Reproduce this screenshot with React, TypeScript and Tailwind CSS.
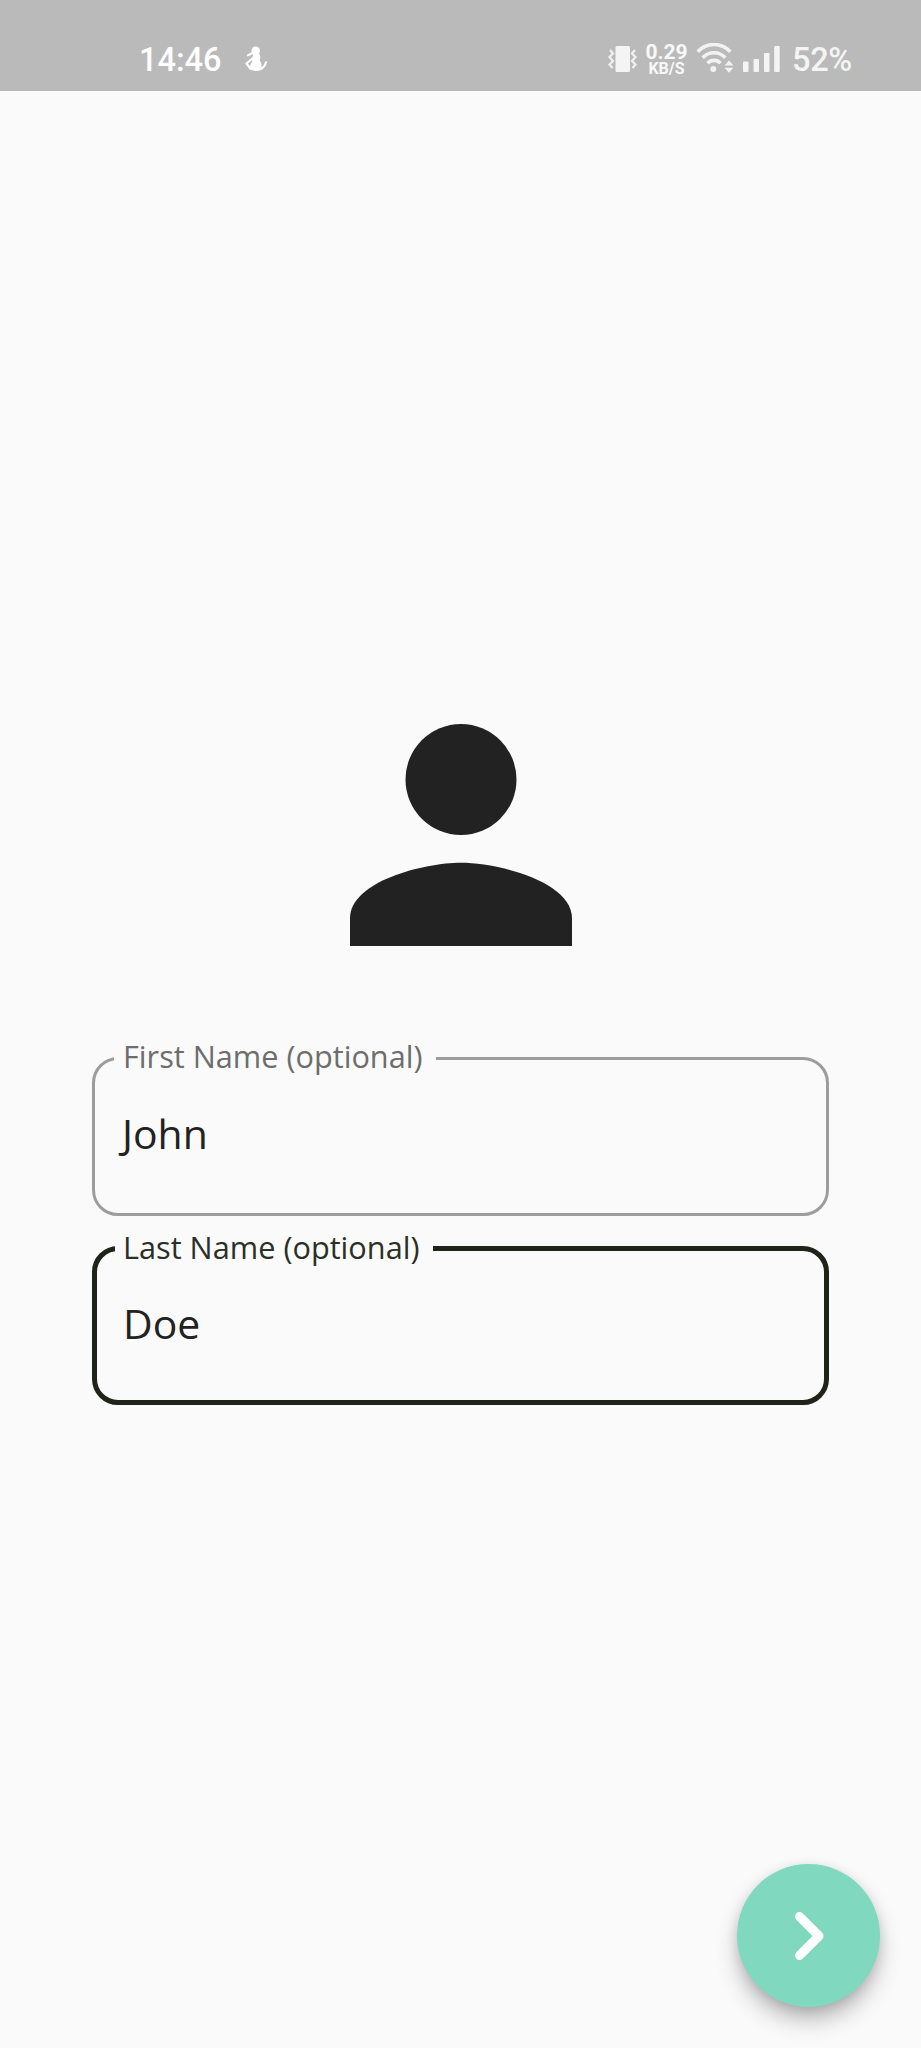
import React from "react";

function Mascot() {
  return (
    <svg className="mt-[46px] ml-[24px] h-[26px] w-[23px]" viewBox="0 0 23 26" fill="none">
      <circle cx="10.7" cy="4.8" r="4.3" fill="#fff" />
      <path d="M8 8h6.500l1 3.500-.8 2.500 1.800 4.500c.5 3.500-2 6.300-5.500 6.300-3.500 0-6-2.300-6-5.300l2-3.500z" fill="#fff" />
      <path d="M2.800 9.400L7 7.300M8.500 11.500L1.500 17.500l4 5.300 5.500 1.200c5.500 0 8.800-3 10-7.700" stroke="#fff" strokeWidth="2.100" strokeLinecap="round" strokeLinejoin="round" />
    </svg>
  );
}

function Vibrate() {
  return (
    <svg className="mt-[45px] h-[28px] w-[29px]" viewBox="0 0 29 28" fill="none">
      <rect x="7.500" y="1" width="14.500" height="26" rx="1.500" fill="#f4f4f4" />
      <path d="M2 5l3 3.500-3.500 3.500 3.500 4-3.500 3.500 3 3.500M27 5l-3 3.500 3.500 3.500-3.500 4 3.500 3.500-3 3.500" stroke="#f1f1f1" strokeWidth="2.200" />
    </svg>
  );
}

function Wifi() {
  return (
    <svg className="mt-[43px] ml-[8px] h-[30px] w-[39px]" viewBox="0 0 39 30" fill="none">
      <path d="M1.700 8.800C10.800-1 25.200-1 34.300 8.800M6.600 14.800c6.300-6.700 16.500-6.700 22.800 0M11.500 20.200c3.700-3.800 9.300-3.800 13 0" stroke="#f2f2f2" strokeWidth="3.600" />
      <circle cx="17.300" cy="26" r="3" fill="#f2f2f2" />
      <path d="M28.500 22.500l4.500-5 4.500 5zM28.500 24.800l4.500 5 4.500-5z" fill="#f2f2f2" />
    </svg>
  );
}

function Signal() {
  return (
    <svg className="mt-[46px] ml-[8px] h-[26px] w-[37px]" viewBox="0 0 37 26" fill="#f4f4f4">
      <rect x="0" y="15.500" width="5.500" height="10.500" rx="1" />
      <rect x="10.500" y="13" width="5.500" height="13" rx="1" />
      <rect x="21" y="7" width="5.500" height="19" rx="1" />
      <rect x="31.200" y="0" width="5.500" height="26" rx="1" />
    </svg>
  );
}

function StatusBar() {
  return (
    <header className="flex h-[91px] items-start bg-[#bababa] pl-[139px] font-['Roboto',sans-serif] text-white">
      <span className="mt-[41px] w-[82px] text-[32.500px] leading-[38px] font-medium whitespace-nowrap">14:46</span>
      <Mascot />
      <div className="ml-auto flex items-start pr-[67px]">
        <Vibrate />
        <div className="mt-[42px] ml-[8px] flex w-[43px] flex-col items-center text-[#f8f8f8]">
          <span className="text-[21px] leading-[21px] font-bold">0.29</span>
          <span className="-mt-[2px] text-[16px] leading-[16px] font-bold">KB/S</span>
        </div>
        <Wifi />
        <Signal />
        <span className="mt-[41px] ml-[12px] w-[62px] text-[32.500px] leading-[38px] font-medium tracking-[-0.3px] whitespace-nowrap text-[#f4f4f4]">52%</span>
      </div>
    </header>
  );
}

function PersonIcon() {
  return (
    <svg className="h-[222px] w-[222px]" viewBox="4 4 16 16" fill="#222">
      <circle cx="12" cy="8" r="4" />
      <path d="M12 14c-2.670 0-8 1.340-8 4v2h16v-2c0-2.660-5.330-4-8-4z" />
    </svg>
  );
}

type FieldProps = { label: string; initial: string; focused?: boolean };

function Field({ label, initial, focused = false }: FieldProps) {
  const [value, setValue] = React.useState(initial);
  return (
    <fieldset
      className={
        focused
          ? "h-[179px] rounded-[26px] border-5 border-[#1e241a] pl-[18px]"
          : "h-[180px] rounded-[26px] border-3 border-[#9d9d9d] pl-[19px]"
      }
    >
      <legend
        className={
          focused
            ? "h-[44px] w-[318px] pl-[8px] text-[30.700px] leading-[42px] whitespace-nowrap text-[#2b3027]"
            : "h-[44px] w-[322px] pl-[9px] text-[30.700px] leading-[40px] whitespace-nowrap text-[#6d6d6d]"
        }
      >
        {label}
      </legend>
      <input
        aria-label={label}
        value={value}
        onChange={(e) => setValue(e.target.value)}
        className="mt-[25px] block h-[56px] w-[680px] bg-transparent indent-[8px] text-[40.900px] leading-[56px] text-[#222] outline-none"
      />
    </fieldset>
  );
}

export default function App() {
  return (
    <div className="relative flex h-[2048px] w-[921px] flex-col overflow-hidden bg-[#fafafa] font-['Open_Sans',sans-serif]">
      <StatusBar />
      <main className="flex flex-col px-[92px] pt-[633px]">
        <div className="flex justify-center">
          <PersonIcon />
        </div>
        <form className="mt-[90px] flex flex-col gap-[10px]">
          <Field label="First Name (optional)" initial="John" />
          <Field label="Last Name (optional)" initial="Doe" focused />
        </form>
      </main>
      <button
        aria-label="Next"
        className="absolute right-[41px] bottom-[41px] flex size-[143px] items-center justify-center rounded-full bg-[#80d8be] shadow-[0_14px_24px_-3px_rgba(0,0,0,0.3),0_2px_12px_rgba(0,0,0,0.1)]"
      >
        <svg className="h-[50px] w-[30px]" viewBox="0 0 30 50" fill="none" stroke="#fff" strokeWidth="9" strokeLinecap="round" strokeLinejoin="round">
          <path d="M5.500 5.500L25 25 5.500 44.500" />
        </svg>
      </button>
    </div>
  );
}
